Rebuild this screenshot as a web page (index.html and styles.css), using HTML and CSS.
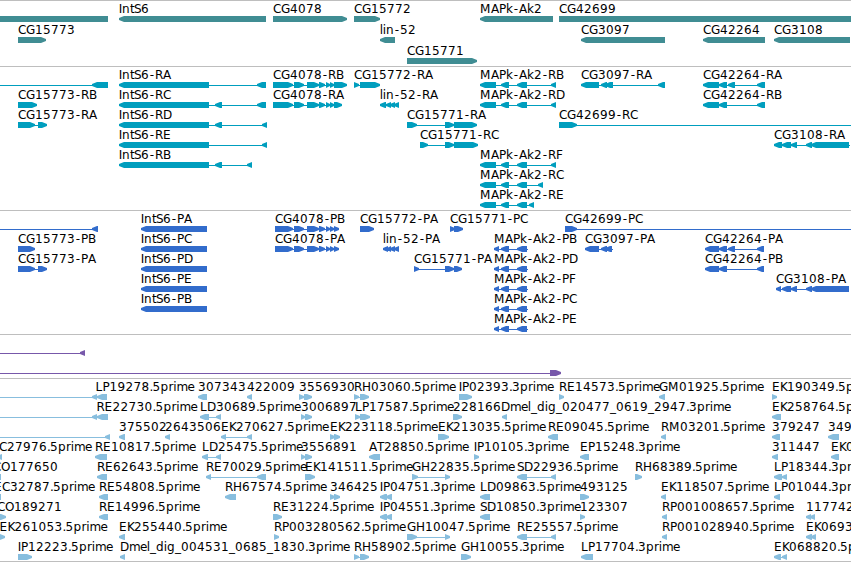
FILE: index.html
```html
<!DOCTYPE html>
<html lang="en">
<head>
    <meta charset="UTF-8">
    <meta name="viewport" content="width=device-width, initial-scale=1.0">
    <title>Genome Browser</title>

    <link rel="stylesheet" href="styles.css">
</head>
<body>
    <main class="browser">
        <section class="track genes" id="genes"></section>
        <section class="track transcripts" id="transcripts"></section>
        <section class="track proteins" id="proteins"></section>
        <section class="track predictions" id="predictions"></section>
        <section class="track ests" id="ests"></section>
    </main>

    <script src="script.js"></script>
</body>
</html>
```

FILE: styles.css
```css
* {
    box-sizing: border-box;
    margin: 0;
    padding: 0;
}

body {
    background-color: #ffffff;
    overflow: hidden;
}

.browser {
    width: 851px;
    height: 562px;
    display: flex;
    flex-direction: column;
    border-bottom: 1px solid #bebebe;
}

.track {
    border-top: 1px solid #bebebe;
    overflow: hidden;
}

.track svg {
    display: block;
    width: 100%;
    height: 100%;
}

.track text {
    font-family: "DejaVu Sans", sans-serif;
    font-size: 12px;
    fill: #000000;
}

.track rect {
    shape-rendering: crispEdges;
}

.genes {
    height: 66px;
    fill: #408d93;
}

.transcripts {
    height: 144px;
    fill: #009ebe;
}

.proteins {
    height: 124px;
    fill: #326ccc;
}

.predictions {
    height: 44px;
    fill: #7758aa;
}

.ests {
    height: 183px;
    fill: #88bede;
}
```

FILE: script.js
```js
// feature: [row, strand, label, exons, line end, label x]
const gene4078 = [[294, 304], [307, 319], [319, 325], [326, 330], [330, 334]];
const mapk = [[480, 496], [501, 509], [517, 527]];
const mapkCds = [[494, 499], [501, 509], [517, 527]];
const intS6 = [119, 209];

const genes = [
    [0, "-", "", [[-20, 108]]],
    [0, "-", "IntS6", [[119, 266]]],
    [0, "+", "CG4078", [[273, 347]]],
    [0, "+", "CG15772", [[354, 380]]],
    [0, "-", "MAPk-Ak2", [[480, 553]]],
    [0, "+", "CG42699", [[559, 870]]],
    [1, "+", "CG15773", [[18, 46]]],
    [1, "-", "lin-52", [[380, 395]]],
    [1, "-", "CG3097", [[581, 665]]],
    [1, "-", "CG42264", [[703, 765]]],
    [1, "-", "CG3108", [[774, 850]]],
    [2, "+", "CG15771", [[407, 477]]]
];

const transcripts = [
    [0, "-", "", [[-20, -10], [92, 108]]],
    [0, "-", "IntS6-RA", [intS6, [257, 266]]],
    [0, "+", "CG4078-RB", [[273, 293], ...gene4078, [334, 347]]],
    [0, "+", "CG15772-RA", [[354, 359], [360, 380]]],
    [0, "-", "MAPk-Ak2-RB", [...mapk, [551, 556]]],
    [0, "-", "CG3097-RA", [[581, 599], [601, 607], [605, 613], [658, 665]]],
    [0, "-", "CG42264-RA", [[703, 719], [719, 727], [728, 735], [757, 765]]],
    [1, "+", "CG15773-RB", [[18, 37]]],
    [1, "-", "IntS6-RC", [intS6, [215, 222], [257, 266]]],
    [1, "+", "CG4078-RA", [[273, 293], ...gene4078, [334, 342]]],
    [1, "-", "lin-52-RA", [[380, 386], [386, 391], [390, 395], [394, 399]]],
    [1, "-", "MAPk-Ak2-RD", [...mapk, [551, 556]]],
    [1, "-", "CG42264-RB", [[703, 719], [719, 727], [757, 765]]],
    [2, "+", "CG15773-RA", [[18, 35], [38, 47]]],
    [2, "-", "IntS6-RD", [intS6, [215, 222], [262, 267]]],
    [2, "+", "CG15771-RA", [[407, 417], [445, 454], [454, 477]]],
    [2, "+", "CG42699-RC", [[559, 577]], 870],
    [3, "-", "IntS6-RE", [intS6, [262, 267]]],
    [3, "+", "CG15771-RC", [[420, 428], [445, 454], [454, 478]]],
    [3, "-", "CG3108-RA", [[774, 782], [782, 791], [791, 797], [806, 812], [811, 849]], 850],
    [4, "-", "IntS6-RB", [intS6, [215, 222], [247, 252]]],
    [4, "-", "MAPk-Ak2-RF", [...mapk, [551, 556]]],
    [5, "-", "MAPk-Ak2-RC", [...mapk, [538, 543]]],
    [6, "-", "MAPk-Ak2-RE", [...mapk, [529, 534]]]
];

const proteins = [
    [0, "-", "", [[-20, -10], [92, 98]]],
    [0, "-", "IntS6-PA", [[141, 207]]],
    [0, "+", "CG4078-PB", [[275, 293], ...gene4078, [334, 339]]],
    [0, "+", "CG15772-PA", [[360, 374]]],
    [0, "+", "CG15771-PC", [[450, 455], [454, 463]]],
    [0, "+", "CG42699-PC", [[565, 577]], 870],
    [1, "+", "CG15773-PB", [[18, 35]]],
    [1, "-", "IntS6-PC", [[141, 207]]],
    [1, "+", "CG4078-PA", [[275, 293], ...gene4078, [334, 339]]],
    [1, "-", "lin-52-PA", [[383, 388], [387, 391], [390, 395], [394, 399]]],
    [1, "-", "MAPk-Ak2-PB", mapkCds, 528],
    [1, "-", "CG3097-PA", [[585, 599], [601, 607], [605, 612]], 613],
    [1, "-", "CG42264-PA", [[705, 719], [719, 727], [728, 735], [757, 764]]],
    [2, "+", "CG15773-PA", [[18, 35], [38, 47]]],
    [2, "-", "IntS6-PD", [[141, 207]]],
    [2, "+", "CG15771-PA", [[414, 419], [445, 454], [454, 462]]],
    [2, "-", "MAPk-Ak2-PD", mapkCds, 528],
    [2, "-", "CG42264-PB", [[705, 719], [719, 727], [757, 764]]],
    [3, "-", "IntS6-PE", [[141, 207]]],
    [3, "-", "MAPk-Ak2-PF", mapkCds, 528],
    [3, "-", "CG3108-PA", [[776, 781], [782, 791], [791, 797], [806, 812], [811, 849]]],
    [4, "-", "IntS6-PB", [[141, 207]]],
    [4, "-", "MAPk-Ak2-PC", mapkCds, 528],
    [5, "-", "MAPk-Ak2-PE", mapkCds, 528]
];

const predictions = [
    [0, "-", "", [[-20, -10], [80, 85]]],
    [1, "+", "", [[-20, -10], [550, 561]]]
];

const ests = [
    [0, "-", "", [[-20, -10], [92, 97]]],
    [0, "-", "LP19278.5prime", [[97, 107]], 107, 95.5],
    [0, "-", "307343", [[198, 207]]],
    [0, "-", "422009", [[247, 252]]],
    [0, "+", "3556930", [[299, 304], [304, 312]]],
    [0, "+", "RH03060.5prime", [[354, 359], [360, 369]]],
    [0, "+", "IP02393.3prime", [[459, 472]]],
    [0, "+", "RE14573.5prime", [[559, 564]]],
    [0, "-", "GM01925.5prime", [[659, 665]]],
    [0, "+", "EK190349.5prime", [[772, 777]]],
    [1, "-", "", [[-20, -10], [92, 97]]],
    [1, "-", "RE22730.5prime", [[97, 108]], 108, 96.5],
    [1, "-", "LD30689.5prime", [[200, 209], [216, 221]]],
    [1, "+", "3006897", [[301, 305], [305, 312]]],
    [1, "+", "LP17587.5prime", [[355, 360], [360, 370]]],
    [1, "+", "228166", [[453, 462]]],
    [1, "-", "Dmel_dig_020477_0619_2947.3prime", [[502, 507]], 507, 501],
    [1, "-", "EK258764.5prime", [[772, 781]]],
    [2, "-", "", [[-20, -10], [105, 110]]],
    [2, "-", "375502", [[119, 125]]],
    [2, "-", "2643506", [[165, 170]]],
    [2, "-", "EK270627.5prime", [[221, 226], [247, 252]]],
    [2, "+", "EK223118.5prime", [[330, 335], [334, 340]]],
    [2, "+", "EK213035.5prime", [[438, 449]]],
    [2, "-", "RE09045.5prime", [[548, 558]]],
    [2, "-", "RM03201.5prime", [[661, 666]]],
    [2, "-", "379247", [[772, 780]]],
    [2, "-", "349125", [[828, 839]]],
    [3, "-", "EC27976.5prime", [[-9, -4], [-3, 2]]],
    [3, "-", "RE10817.5prime", [[95, 107]]],
    [3, "-", "LD25475.5prime", [[202, 208], [216, 221]]],
    [3, "+", "3556891", [[301, 305], [305, 312]]],
    [3, "-", "AT28850.5prime", [[369, 380]]],
    [3, "+", "IP10105.3prime", [[474, 479]]],
    [3, "-", "EP15248.3prime", [[580, 589]]],
    [3, "-", "311447", [[772, 778]]],
    [3, "-", "EK093124.5prime", [[831, 839]]],
    [4, "-", "CO177650", [[-7, 1]]],
    [4, "-", "RE62643.5prime", [[97, 107]]],
    [4, "-", "RE70029.5prime", [[206, 211], [257, 266]]],
    [4, "+", "EK141511.5prime", [[305, 315]]],
    [4, "+", "GH22835.5prime", [[412, 418], [445, 450]]],
    [4, "-", "SD22936.5prime", [[517, 527], [551, 556]]],
    [4, "+", "RH68389.5prime", [[635, 642]]],
    [4, "-", "LP18344.3prime", [[774, 782], [782, 787]]],
    [5, "-", "EC32787.5prime", [[-6, 1]]],
    [5, "-", "RE54808.5prime", [[99, 108]]],
    [5, "-", "RH67574.5prime", [[225, 236]]],
    [5, "+", "346425", [[330, 335], [334, 340]]],
    [5, "-", "IP04751.3prime", [[380, 387], [386, 392]]],
    [5, "-", "LD09863.5prime", [[480, 490]]],
    [5, "+", "493125", [[580, 589]]],
    [5, "-", "EK118507.5prime", [[661, 666]]],
    [5, "-", "LP01044.3prime", [[774, 780]]],
    [6, "+", "CO189271", [[-3, 6]]],
    [6, "-", "RE14996.5prime", [[99, 108]]],
    [6, "+", "RE31224.5prime", [[273, 282]]],
    [6, "-", "IP04551.3prime", [[380, 387], [386, 392]]],
    [6, "-", "SD10850.3prime", [[480, 490]]],
    [6, "+", "123307", [[580, 585]]],
    [6, "-", "RP001008657.5prime", [[662, 667]]],
    [6, "-", "117742", [[806, 811], [810, 815]]],
    [7, "+", "EK261053.5prime", [[-0.5, 5]]],
    [7, "-", "EK255440.5prime", [[119, 125]]],
    [7, "+", "RP003280562.5prime", [[274, 279]]],
    [7, "+", "GH10047.5prime", [[407, 417], [445, 450]]],
    [7, "-", "RE25557.5prime", [[517, 527], [551, 556]]],
    [7, "-", "RP001028940.5prime", [[662, 667]]],
    [7, "-", "EK069312.5prime", [[806, 812], [811, 816]]],
    [8, "+", "IP12223.5prime", [[18, 32]]],
    [8, "-", "Dmel_dig_004531_0685_1830.3prime", [[120, 125]]],
    [8, "+", "RH58902.5prime", [[354, 359], [360, 369]]],
    [8, "+", "GH10055.3prime", [[461, 471]]],
    [8, "-", "LP17704.3prime", [[581, 593]]],
    [8, "-", "EK068820.5prime", [[774, 781], [782, 787]]]
];

// whole-pixel glyph widths, anything not listed is 8
const glyphWidths = {
    I: 3, i: 3, l: 3, ".": 3, t: 4, r: 5, "-": 6, "_": 6,
    S: 7, P: 7, K: 7, k: 7, L: 7, F: 7, T: 7, e: 7,
    G: 9, D: 9, O: 9, H: 9, M: 11, m: 11
};

function glyphPositions(label, x) {
    return [...label].map(ch => {
        let shift = 0;
        if ("Iil".includes(ch)) shift = -0.2;
        if (ch === "-") shift = 0.8;
        const pos = x + shift;
        x += glyphWidths[ch] || 8;
        return pos;
    }).join(" ");
}

// box with an arrow head on the strand side
function exonPath(x1, x2, y, strand) {
    const head = Math.min(5, x2 - x1);
    if (strand === "-") {
        return `M${x1} ${y + 2}L${x1 + head} ${y}H${x2}V${y + 6}H${x1 + head}L${x1} ${y + 4}Z`;
    }
    return `M${x1} ${y}H${x2 - head}L${x2} ${y + 2}V${y + 4}L${x2 - head} ${y + 6}H${x1}Z`;
}

function drawTrack(id, features, rowHeight) {
    let svg = "";
    features.forEach(([row, strand, label, exons, lineEnd, labelX]) => {
        const y = row * rowHeight + 15;
        const start = exons[0][0];
        const end = lineEnd || exons[exons.length - 1][1];
        if (exons.length > 1 || lineEnd) {
            svg += `<rect x="${start + 1}" y="${y + 3}" width="${end - start - 1}" height="1"/>`;
        }
        svg += `<path d="${exons.map(e => exonPath(e[0], e[1], y, strand)).join("")}"/>`;
        if (label) {
            svg += `<text x="${glyphPositions(label, labelX || start)}" y="${y - 3}">${label}</text>`;
        }
    });
    document.getElementById(id).innerHTML = `<svg>${svg}</svg>`;
}

drawTrack("genes", genes, 21);
drawTrack("transcripts", transcripts, 20);
drawTrack("proteins", proteins, 20);
drawTrack("predictions", predictions, 20);
drawTrack("ests", ests, 20);
```
